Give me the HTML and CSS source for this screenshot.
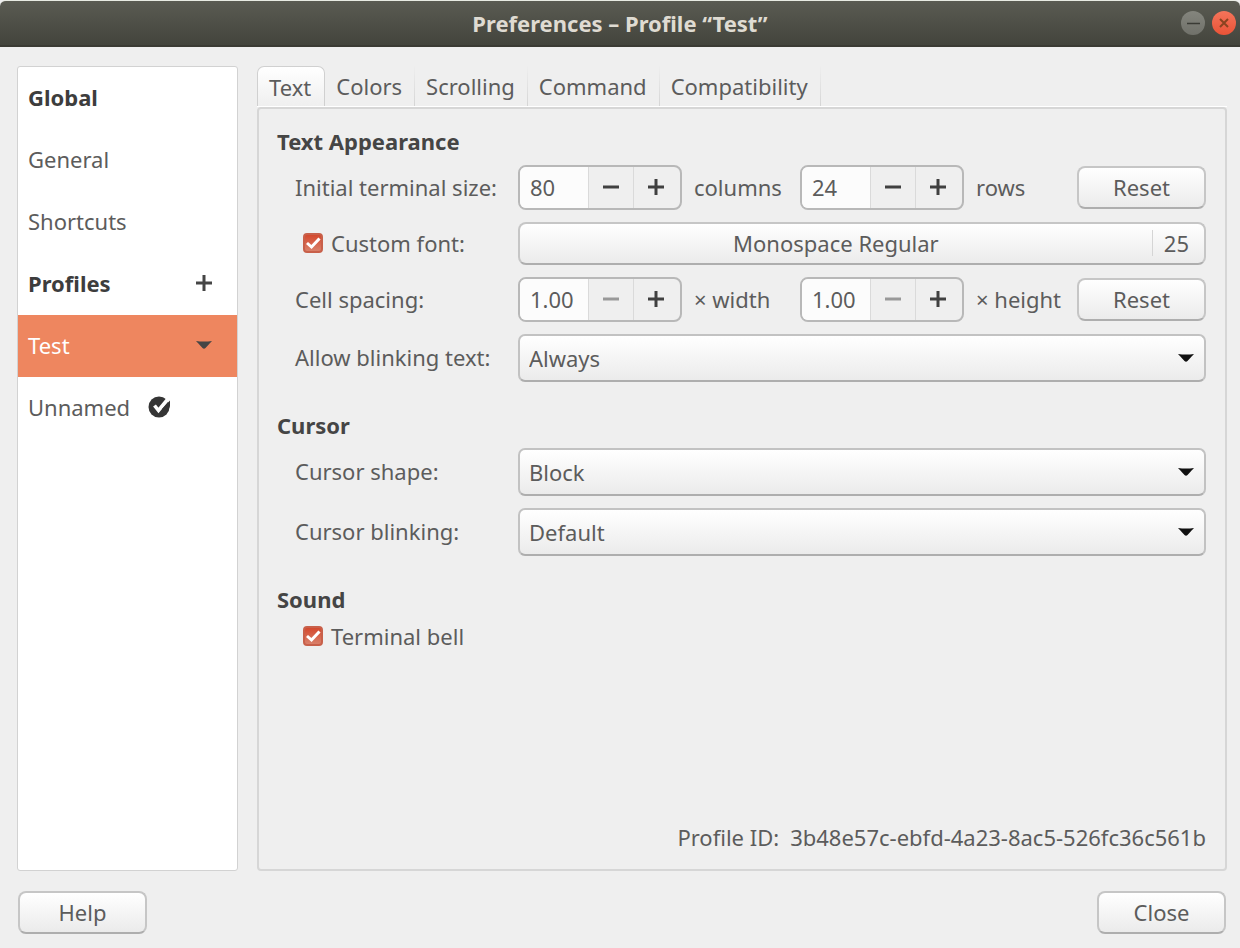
FILE: index.html
```html
<!DOCTYPE html>
<html lang="en">
<head>
<meta charset="utf-8">
<title>Preferences – Profile “Test”</title>
<link rel="stylesheet" href="styles.css">
</head>
<body>
<svg class="defs" aria-hidden="true">
  <symbol id="plus" viewBox="0 0 16 16"><path d="M8 0v16M0 8h16" stroke="currentColor" stroke-width="3" fill="none"/></symbol>
  <symbol id="minus" viewBox="0 0 16 16"><path d="M0 8h16" stroke="currentColor" stroke-width="3" fill="none"/></symbol>
  <symbol id="arrow" viewBox="0 0 16 8"><path d="M0 0Q8 1 16 0Q14 2 9.500 7Q8 8.500 6.500 7Q2 2 0 0Z" fill="currentColor"/></symbol>
  <symbol id="tick" viewBox="0 0 20 20"><path d="M4 10l4.500 4L16.500 5.500" stroke="#fff" stroke-width="3" fill="none"/></symbol>
</svg>

<header class="titlebar">
  <h1 class="title">Preferences – Profile “Test”</h1>
  <div class="window-buttons">
    <button class="window-button" aria-label="Minimize"><svg viewBox="0 0 24 24"><path d="M6 12.500h13" stroke="#3a3b35" stroke-width="1.500"/></svg></button>
    <button class="window-button window-close" aria-label="Close window"><svg viewBox="0 0 24 24"><path d="M8 8l8 8M16 8l-8 8" stroke="#8a4320" stroke-width="2"/></svg></button>
  </div>
</header>

<main class="content">
  <nav class="sidebar">
    <div class="side-row side-heading">Global</div>
    <a class="side-row" href="#general">General</a>
    <a class="side-row" href="#shortcuts">Shortcuts</a>
    <div class="side-row side-heading"><span>Profiles</span><button class="side-action" aria-label="Add profile"><svg class="sign"><use href="#plus"/></svg></button></div>
    <div class="side-row side-selected"><a href="#test" aria-current="page">Test</a><button class="side-action" aria-label="Profile menu"><svg class="arrow"><use href="#arrow"/></svg></button></div>
    <a class="side-row" href="#unnamed"><span>Unnamed</span>
      <svg class="default-mark" viewBox="0 0 22 22" role="img" aria-label="Default profile"><circle cx="11" cy="11" r="10.500" fill="#353535"/><path d="M6.500 9.500l4 5L20 3" stroke="#fff" stroke-width="3.600" fill="none"/><path d="M14 13L22 4.500L22 10L20 15Z" fill="#353535"/></svg>
    </a>
  </nav>

  <section class="notebook">
    <div class="tabs" role="tablist">
      <button class="tab tab-active" role="tab" aria-selected="true">Text</button>
      <button class="tab" role="tab" aria-selected="false">Colors</button>
      <button class="tab" role="tab" aria-selected="false">Scrolling</button>
      <button class="tab" role="tab" aria-selected="false">Command</button>
      <button class="tab" role="tab" aria-selected="false">Compatibility</button>
    </div>

    <div class="panel" role="tabpanel">
      <section class="group">
        <h2 class="heading">Text Appearance</h2>
        <div class="row">
          <label for="columns">Initial terminal size:</label>
          <div class="sizes">
            <div class="spin"><input id="columns" type="text" value="80"><button aria-label="Fewer columns"><svg class="sign"><use href="#minus"/></svg></button><button aria-label="More columns"><svg class="sign"><use href="#plus"/></svg></button></div>
            <label class="unit" for="columns">columns</label>
            <div class="spin"><input id="rows" type="text" value="24"><button aria-label="Fewer rows"><svg class="sign"><use href="#minus"/></svg></button><button aria-label="More rows"><svg class="sign"><use href="#plus"/></svg></button></div>
            <label class="unit" for="rows">rows</label>
            <button class="button">Reset</button>
          </div>
        </div>
        <div class="row">
          <label class="check"><span class="box"><input type="checkbox" checked><svg><use href="#tick"/></svg></span>Custom font:</label>
          <button class="button font-button"><span class="font-name">Monospace Regular</span><span class="font-size">25</span></button>
        </div>
        <div class="row">
          <label for="width">Cell spacing:</label>
          <div class="sizes">
            <div class="spin"><input id="width" type="text" value="1.00"><button aria-label="Narrower" disabled><svg class="sign"><use href="#minus"/></svg></button><button aria-label="Wider"><svg class="sign"><use href="#plus"/></svg></button></div>
            <label class="unit" for="width">× width</label>
            <div class="spin"><input id="height" type="text" value="1.00"><button aria-label="Shorter" disabled><svg class="sign"><use href="#minus"/></svg></button><button aria-label="Taller"><svg class="sign"><use href="#plus"/></svg></button></div>
            <label class="unit" for="height">× height</label>
            <button class="button">Reset</button>
          </div>
        </div>
        <div class="row">
          <label for="blink-text">Allow blinking text:</label>
          <div class="combo"><select id="blink-text"><option>Always</option></select><svg class="arrow"><use href="#arrow"/></svg></div>
        </div>
      </section>

      <section class="group">
        <h2 class="heading">Cursor</h2>
        <div class="row">
          <label for="shape">Cursor shape:</label>
          <div class="combo"><select id="shape"><option>Block</option></select><svg class="arrow"><use href="#arrow"/></svg></div>
        </div>
        <div class="row">
          <label for="blink">Cursor blinking:</label>
          <div class="combo"><select id="blink"><option>Default</option></select><svg class="arrow"><use href="#arrow"/></svg></div>
        </div>
      </section>

      <section class="group">
        <h2 class="heading">Sound</h2>
        <div class="row">
          <label class="check"><span class="box"><input type="checkbox" checked><svg><use href="#tick"/></svg></span>Terminal bell</label>
        </div>
      </section>

      <p class="profile-id"><span>Profile ID:</span><span>3b48e57c-ebfd-4a23-8ac5-526fc36c561b</span></p>
    </div>
  </section>
</main>

<footer class="actions">
  <button class="button">Help</button>
  <button class="button">Close</button>
</footer>
</body>
</html>
```

FILE: styles.css
```css
* { box-sizing: border-box; }

body {
  margin: 0;
  min-height: 100vh;
  display: flex;
  flex-direction: column;
  background: #efefef;
  color: #5c5c5c;
  font: 22px/30px "Noto Sans", sans-serif;
}

button, input, select {
  font: inherit;
  color: inherit;
  margin: 0;
  padding: 0;
  border: 0;
  background: none;
  outline: none;
}

a { color: inherit; text-decoration: none; }
svg { display: block; }
.defs { display: none; }

.titlebar {
  display: grid;
  grid-template-columns: 1fr auto 1fr;
  align-items: center;
  height: 47px;
  padding: 0 4px;
  border-top: 1px solid #e8ebe2;
  border-bottom: 2px solid #3b3b34;
  border-radius: 6px 6px 0 0;
  background: linear-gradient(#5a5b52, #43443c);
}

.title {
  grid-column: 2;
  margin: 0;
  font-size: 22px;
  line-height: 30px;
  font-weight: 700;
  color: #dfdbd2;
}

.window-buttons { display: flex; justify-content: flex-end; gap: 7px; }

.window-button {
  width: 24px;
  height: 24px;
  border-radius: 50%;
  background: linear-gradient(#84857d, #70716a);
}

.window-close { background: linear-gradient(#f4745a, #ea5337); }

.content {
  flex: 1;
  display: flex;
  gap: 19px;
  padding: 19px 13px 0 17px;
}

.sidebar {
  width: 221px;
  border: 1px solid #d2d2d2;
  border-radius: 3px;
  background: #fff;
}

.side-row {
  display: flex;
  align-items: center;
  height: 62px;
  padding: 0 25px 2px 10px;
}

.side-heading { font-weight: 700; color: #3d3d3d; justify-content: space-between; }
.side-selected { background: #ee865f; color: #fff; justify-content: space-between; }
.side-action { color: #454545; }
.default-mark { width: 22px; height: 22px; margin-left: 18px; }
.sign { width: 16px; height: 16px; }
.arrow { width: 16px; height: 8px; }

.notebook { flex: 1; display: flex; flex-direction: column; }
.tabs { display: flex; height: 41px; border-bottom: 1px solid #fff; }

.tab {
  padding: 0 12px 0 11px;
  border-right: 1px solid;
  border-image: linear-gradient(#efefef, #d4d4d4) 1;
}

.tab-active {
  padding: 0 13px 0 11px;
  border: 1px solid #d0d0d0;
  border-bottom: 0;
  border-image: none;
  border-radius: 7px 7px 0 0;
  background: linear-gradient(#fff, #efefef);
}

.panel {
  flex: 1;
  display: flex;
  flex-direction: column;
  gap: 28px;
  padding: 17px 19px 17px 18px;
  border: 2px solid #d6d6d6;
  border-radius: 4px;
}

.group { display: flex; flex-direction: column; gap: 12px; }

.heading {
  margin: 0 0 -3px;
  font-size: 22px;
  line-height: 30px;
  font-weight: 700;
  color: #454545;
}

.group + .group .heading { margin-bottom: -4px; }

.row {
  display: grid;
  grid-template-columns: 223px 1fr;
  align-items: center;
  padding-left: 18px;
}

.row label { padding-bottom: 2px; }

.sizes {
  display: grid;
  grid-template-columns: 164px 118px 164px 1fr 129px;
  align-items: center;
}

.unit { padding-left: 12px; }

.spin {
  display: grid;
  grid-template-columns: 68px 45px 1fr;
  height: 45px;
  border: 2px solid #b8b8b8;
  border-radius: 8px;
  overflow: hidden;
}

.spin input { width: 100%; min-width: 0; padding: 0 0 2px 10px; background: #fcfcfc; }

.spin button {
  display: grid;
  place-items: center;
  padding-bottom: 1px;
  border-left: 1px solid #dadada;
  color: #404040;
}

.spin button:last-child { padding-right: 2px; }
.spin button:disabled { color: #999; }

.button {
  width: 129px;
  height: 43px;
  padding-bottom: 2px;
  border: 2px solid #c6c6c6;
  border-bottom-color: #aeaeae;
  border-radius: 8px;
  background: linear-gradient(#fff, #ebebeb);
}

.font-button { display: flex; align-items: center; width: 100%; }
.font-name { flex: 1; }
.font-size { padding: 0 15px 0 11px; border-left: 1px solid #d5d5d5; line-height: 26px; }

.check { display: flex; align-items: center; gap: 8px; padding-left: 8px; line-height: 28px; }
.box { display: grid; width: 20px; height: 20px; }
.box > * { grid-area: 1 / 1; width: 20px; height: 20px; }

.box input {
  appearance: none;
  border: 2px solid #c8604a;
  border-radius: 4px;
  background: linear-gradient(#d4492e, #d9806a);
}

.box svg { pointer-events: none; }

.combo { display: grid; align-items: center; }
.combo > * { grid-area: 1 / 1; }

.combo select {
  appearance: none;
  width: 100%;
  height: 48px;
  padding-left: 9px;
  border: 2px solid #c2c2c2;
  border-bottom-color: #aeaeae;
  border-radius: 7px;
  background: linear-gradient(#fff, #ebebeb);
}

.combo .arrow { justify-self: end; margin-right: 12px; color: #111; pointer-events: none; }

.profile-id { display: flex; justify-content: flex-end; gap: 11px; margin: auto 0 0; }

.actions { display: flex; justify-content: space-between; padding: 20px 14px 14px 18px; }
```
